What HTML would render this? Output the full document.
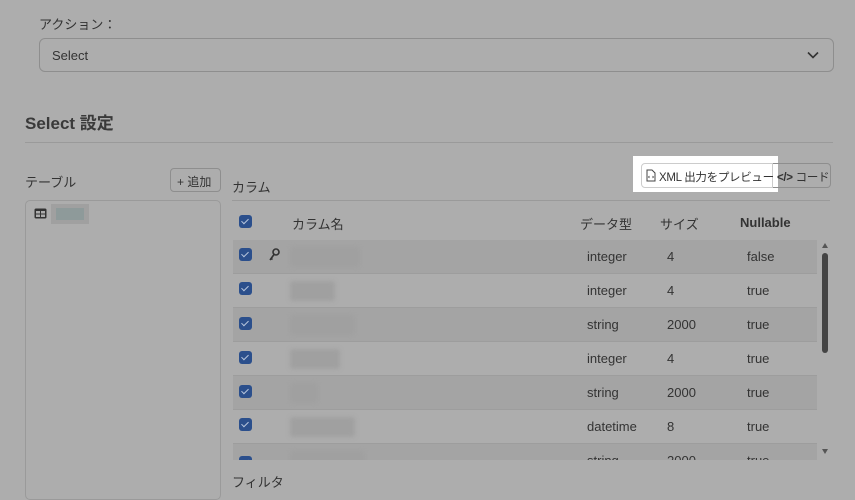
<!DOCTYPE html>
<html><head><meta charset="utf-8"><style>
*{box-sizing:border-box;margin:0;padding:0}
body{width:855px;height:496px;overflow:hidden;background:#adadad;font-family:"Liberation Sans","Noto Sans CJK JP",sans-serif;color:#333;position:relative}
.a{position:absolute;white-space:nowrap}
.cb{position:absolute;width:13px;height:13px;background:#2b4f8c;border-radius:3px}
.cb:after{content:"";position:absolute;left:4px;top:2px;width:3px;height:6px;border:solid #b8c6dd;border-width:0 1.5px 1.5px 0;transform:rotate(45deg)}
.row{position:absolute;left:233px;width:584px;height:34px;border-bottom:1px solid #9d9d9d;font-size:13px}
.row.s{background:#a4a4a4}
.row span{position:absolute;top:9px}
.blur{position:absolute;top:7px;height:20px;background:#a0a0a0;filter:blur(2px);border-radius:3px}
</style></head><body>
<div class="a" style="left:39px;top:14px;font-size:13px">アクション：</div>
<div class="a" style="left:39px;top:38px;width:795px;height:34px;border:1px solid #8e8e8e;border-radius:6px;font-size:13px;padding:9px 12px">Select
<svg class="a" style="right:14px;top:12px" width="12" height="8" viewBox="0 0 12 8"><path d="M1 1.5l5 5 5-5" fill="none" stroke="#333" stroke-width="1.6"/></svg></div>
<div class="a" style="left:25px;top:109px;font-size:17px;font-weight:bold;color:#3a3a3a">Select 設定</div>
<div class="a" style="left:25px;top:142px;width:808px;height:1px;background:#9a9a9a"></div>
<div class="a" style="left:25px;top:172px;font-size:13px">テーブル</div>
<div class="a" style="left:170px;top:168px;width:51px;height:24px;border:1px solid #8e8e8e;border-radius:4px;font-size:12px;padding:4px 6px">+ 追加</div>
<div class="a" style="left:25px;top:200px;width:196px;height:300px;border:1px solid #9a9a9a;border-radius:5px"></div>
<svg class="a" style="left:34px;top:208px" width="13" height="11" viewBox="0 0 13 11"><rect x="0.5" y="0.5" width="12" height="10" rx="1.5" fill="#333"/><rect x="2" y="3" width="4" height="2.5" fill="#adadad"/><rect x="7" y="3" width="4" height="2.5" fill="#adadad"/><rect x="2" y="6.5" width="4" height="2.5" fill="#adadad"/><rect x="7" y="6.5" width="4" height="2.5" fill="#adadad"/></svg>
<div class="a" style="left:51px;top:204px;width:38px;height:20px;background:#a0a0a0"></div>
<div class="a" style="left:56px;top:208px;width:28px;height:12px;background:#8e9a9a"></div>
<div class="a" style="left:232px;top:177px;font-size:13px">カラム</div>
<div class="a" style="left:633px;top:156px;width:145px;height:36px;background:#fff"></div>
<div class="a" style="left:641px;top:163px;width:132px;height:25px;border:1px solid #ccc;border-radius:4px 0 0 4px;font-size:11.5px;padding:5px 0 0 17px;background:#fff;color:#333;letter-spacing:-0.3px">XML 出力をプレビュー</div>
<svg class="a" style="left:646px;top:169px" width="10" height="13" viewBox="0 0 10 13"><path d="M1 1h5l3 3v8H1z" fill="none" stroke="#444" stroke-width="1"/><path d="M3.5 7l-1 1 1 1M6.5 7l1 1-1 1" fill="none" stroke="#444" stroke-width=".8"/></svg>
<div class="a" style="left:773px;top:163px;width:58px;height:25px;border:1px solid #8e8e8e;border-left:none;border-radius:0 4px 4px 0;font-size:11.5px;padding:5px 0 0 4px;letter-spacing:-0.3px"><b>&lt;/&gt;</b> コード</div>
<div class="a" style="left:232px;top:200px;width:598px;height:1px;background:#9a9a9a"></div>
<div class="cb" style="left:239px;top:215px"></div>
<div class="a" style="left:292px;top:214px;font-size:13px">カラム名</div>
<div class="a" style="left:580px;top:214px;font-size:13px">データ型</div>
<div class="a" style="left:660px;top:214px;font-size:13px">サイズ</div>
<div class="a" style="left:740px;top:215px;font-size:13px;font-weight:bold">Nullable</div>
<div class="a" style="left:233px;top:240px;width:584px;height:220px;overflow:hidden">
<div class="row s" style="left:0;top:0"><div class="cb" style="left:6px;top:8px"></div>
<svg class="a" style="left:35px;top:8px" width="12" height="14" viewBox="0 0 12 14"><circle cx="8" cy="4" r="3" fill="none" stroke="#333" stroke-width="1.6"/><path d="M6 6.5L2 12M3 10.5l1.5 1" stroke="#333" stroke-width="1.6" fill="none"/></svg>
<div class="blur" style="left:57px;width:70px"></div><span style="left:354px">integer</span><span style="left:434px">4</span><span style="left:514px">false</span></div>
<div class="row" style="left:0;top:34px"><div class="cb" style="left:6px;top:8px"></div><div class="blur" style="left:57px;width:45px"></div><span style="left:354px">integer</span><span style="left:434px">4</span><span style="left:514px">true</span></div>
<div class="row s" style="left:0;top:68px"><div class="cb" style="left:6px;top:9px"></div><div class="blur" style="left:57px;width:65px"></div><span style="left:354px">string</span><span style="left:434px">2000</span><span style="left:514px">true</span></div>
<div class="row" style="left:0;top:102px"><div class="cb" style="left:6px;top:9px"></div><div class="blur" style="left:57px;width:50px"></div><span style="left:354px">integer</span><span style="left:434px">4</span><span style="left:514px">true</span></div>
<div class="row s" style="left:0;top:136px"><div class="cb" style="left:6px;top:9px"></div><div class="blur" style="left:57px;width:28px"></div><span style="left:354px">string</span><span style="left:434px">2000</span><span style="left:514px">true</span></div>
<div class="row" style="left:0;top:170px"><div class="cb" style="left:6px;top:8px"></div><div class="blur" style="left:57px;width:65px"></div><span style="left:354px">datetime</span><span style="left:434px">8</span><span style="left:514px">true</span></div>
<div class="row s" style="left:0;top:204px"><div class="cb" style="left:6px;top:12px"></div><div class="blur" style="left:57px;width:75px"></div><span style="left:354px">string</span><span style="left:434px">2000</span><span style="left:514px">true</span></div>
</div>
<div class="a" style="left:822px;top:243px;width:0;height:0;border:3.5px solid transparent;border-bottom:5px solid #555;border-top:none"></div>
<div class="a" style="left:822px;top:253px;width:6px;height:100px;background:#444;border-radius:3px"></div>
<div class="a" style="left:822px;top:449px;width:0;height:0;border:3.5px solid transparent;border-top:5px solid #555;border-bottom:none"></div>
<div class="a" style="left:232px;top:472px;font-size:13px">フィルタ</div>
</body></html>
